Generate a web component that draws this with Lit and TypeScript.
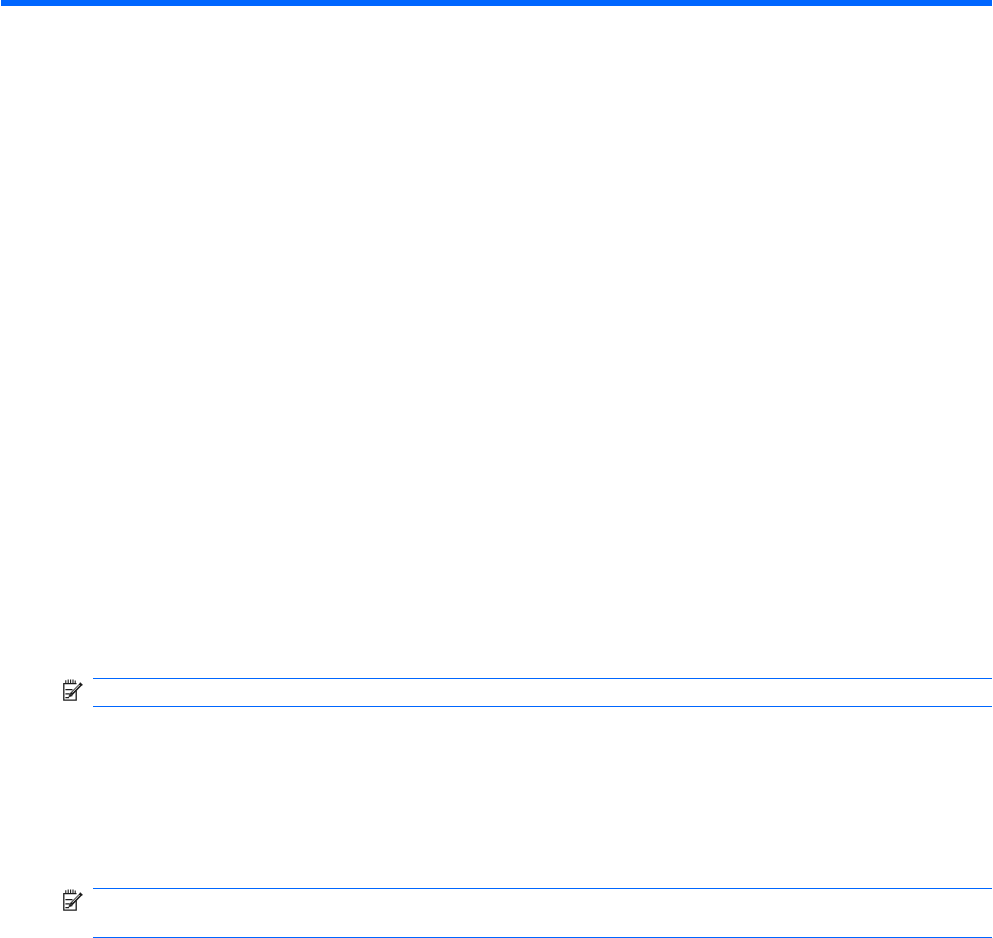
import { LitElement, html, css, svg } from "lit";
import { customElement } from "lit/decorators.js";

const noteIcon = svg`<svg class="icon" width="20" height="22" viewBox="0 0 20 22" fill="none" stroke="#1c1c1c" stroke-width="1.3">
  <path d="M13.5 4.6H.8V21.2H13.2V11.5"/>
  <path d="M2.8 1.2V5M5.2 .6V5M7.6 .6V5M10 .6V5M12.2 1.6V5" stroke-width="1.1"/>
  <path d="M2.4 10.6H9.5M2.4 14.8H6.5M2.4 18.6H6" stroke-width="1.2"/>
  <path d="M8 15.4 18.2 5" stroke-width="3.2"/>
  <path d="M9.2 13.6 16.6 6" stroke="#fff" stroke-width="1"/>
  <path d="M5.8 18 6.8 14.4 9.4 16.8Z" fill="#1c1c1c" stroke-width=".5"/>
  <path d="M16.8 3.8 19.4 6.2" stroke-width="1.3"/>
</svg>`;

@customElement("note-block")
class NoteBlock extends LitElement {
  static properties = { tall: { type: Boolean } };
  tall = false;
  static styles = css`
    :host { display: flex; align-items: flex-start; gap: 10px; padding-left: 62px; }
    .icon { display: block; margin-top: 1px; flex: none; }
    .box { flex: 1; border-top: 1px solid #0066ff; border-bottom: 1px solid #0066ff; height: 27px; }
    .box.tall { height: 48px; }
  `;
  render() {
    return html`${noteIcon}<div class="box ${this.tall ? "tall" : ""}"></div>`;
  }
}

@customElement("app-root")
class AppRoot extends LitElement {
  static styles = css`
    :host { display: block; height: 938px; background: #fff; overflow: hidden; padding: 0 1px 0 1px; box-sizing: border-box; }
    .bar { height: 6px; background: #0066ff; }
    .first { margin-top: 672px; }
    .second { margin-top: 181px; }
  `;
  render() {
    return html`
      <div class="bar"></div>
      <note-block class="first"></note-block>
      <note-block class="second" tall></note-block>
    `;
  }
}
